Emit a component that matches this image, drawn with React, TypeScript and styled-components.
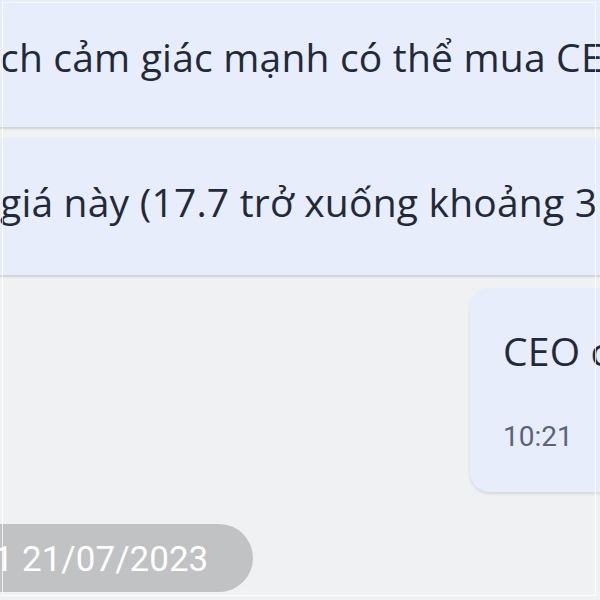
import React from 'react'
import styled, { createGlobalStyle } from 'styled-components'

const Global = createGlobalStyle`
    html, body {
        margin: 0;
        padding: 0;
        background: #f0f1f3;
        overflow: hidden;
    }
`

const Viewport = styled.div`
    position: relative;
    width: 600px;
    height: 600px;
    overflow: hidden;
    background: #f0f1f3;
    font-family: 'Open Sans', 'Noto Sans', sans-serif;
    color: #1f2a3b;
`

// faint frame of the captured screen, over the content
const Frame = styled.div`
    position: absolute;
    inset: 2px 4px 4px 2px;
    border: 1px solid rgba(255, 255, 255, 0.75);
    pointer-events: none;
`

const Thread = styled.div`
    display: flex;
    flex-direction: column;
    margin-top: -7px;
`

const InBubble = styled.div<{ $bottom: number; $gap?: number }>`
    margin: ${(p) => p.$gap || 0}px -40px 0 -30px;
    padding: 38px 0 ${(p) => p.$bottom}px 30px;
    background: #e7edfb;
    border-radius: 0 0 4px 4px;
    box-shadow: 0 2px 2px rgba(60, 64, 80, 0.18);
`

const Line = styled.div`
    font-size: 39px;
    line-height: 52px;
    letter-spacing: 0.2px;
    white-space: nowrap;
`

const OutRow = styled.div`
    display: flex;
    justify-content: flex-end;
    margin-top: 13px;
`

const OutBubble = styled.div`
    width: 200px;
    margin-right: -70px;
    box-sizing: border-box;
    padding: 37px 0 37px 33px;
    background: #e7edfb;
    border-radius: 20px;
    box-shadow: 0 2px 3px rgba(60, 64, 80, 0.14);
    overflow: hidden;
`

const Time = styled.div`
    margin-top: 42px;
    font-family: Roboto, 'Liberation Sans', sans-serif;
    font-size: 28px;
    line-height: 36px;
    color: #5a6579;
`

const DateRow = styled.div`
    display: flex;
    margin-top: 32px;
`

const DatePill = styled.div`
    margin-left: -46px;
    padding: 0 45px 0 20px;
    height: 68px;
    border-radius: 34px;
    background: #c1c2c4;
    color: #ffffff;
    font-family: Roboto, 'Liberation Sans', sans-serif;
    font-size: 35px;
    line-height: 72px;
    white-space: nowrap;
    overflow: hidden;
`

export default function App() {
    return (
        <Viewport>
            <Global />
            <Thread>
                <InBubble $bottom={44}>
                    <Line>ch cảm giác mạnh có thể mua CEO</Line>
                </InBubble>
                <InBubble $bottom={47} $gap={11}>
                    <Line>giá này (17.7 trở xuống khoảng 3</Line>
                </InBubble>
                <OutRow>
                    <OutBubble>
                        <Line>CEO có</Line>
                        <Time>10:21</Time>
                    </OutBubble>
                </OutRow>
                <DateRow>
                    <DatePill>01 21/07/2023</DatePill>
                </DateRow>
            </Thread>
            <Frame />
        </Viewport>
    )
}
